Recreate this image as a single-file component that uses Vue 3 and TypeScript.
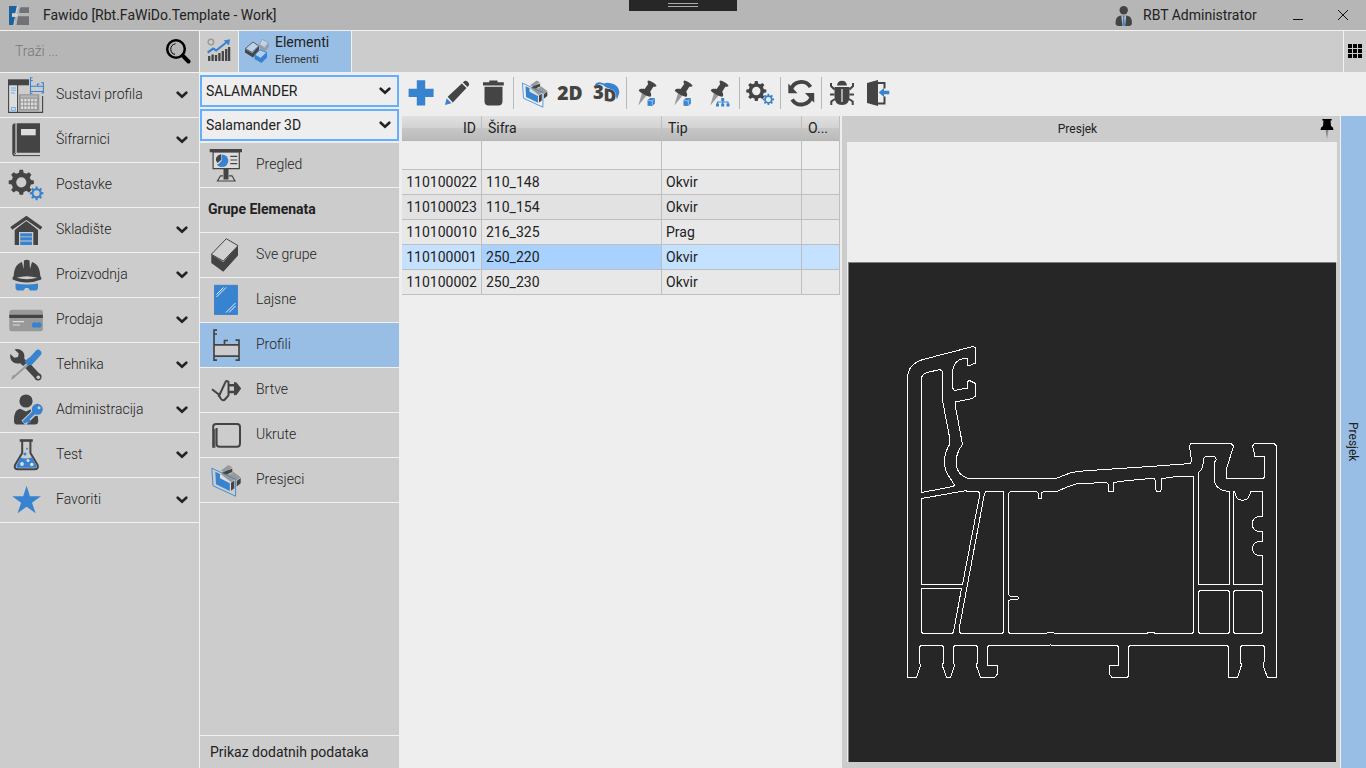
<script setup lang="ts">
import { ref } from 'vue'

interface MenuItem { label: string; icon: string; expandable?: boolean; heading?: boolean }
interface Row { id: string; code: string; type: string }

const INK = '#444'
const BLUE = '#3883cf'

function gear(cx: number, cy: number, outer: number, inner: number, hole: number, color: string): string {
  const teeth = 8
  const step = (Math.PI * 2) / teeth
  const pts: string[] = []
  for (let i = 0; i < teeth; i++) {
    const a = i * step
    const corners: [number, number][] = [[-0.3, inner], [-0.18, outer], [0.18, outer], [0.3, inner]]
    for (const [k, r] of corners) {
      pts.push(`${(cx + r * Math.cos(a + k * step)).toFixed(2)} ${(cy + r * Math.sin(a + k * step)).toFixed(2)}`)
    }
  }
  return `<path fill-rule="evenodd" fill="${color}" d="M${pts.join('L')}ZM${cx - hole} ${cy}a${hole} ${hole} 0 1 0 ${hole * 2} 0a${hole} ${hole} 0 1 0 ${-hole * 2} 0Z"/>`
}

let keys = ''
for (let r = 0; r < 3; r++) for (let c = 0; c < 5; c++) keys += `<rect x="${12.8 + c * 3.4}" y="${21.8 + r * 3.8}" width="2.4" height="2.6" fill="#ddd"/>`

const sectionIcon = `
  <path fill="#999" d="M12.7 8.8L20.3 3L24.3 5.3L17 10.5ZM21.3 13L25.3 9.7L32.7 15.3L28.7 18.3ZM12 12.6L17.5 10L29 16L22 20.6Z"/>
  <path fill="${INK}" d="M13.5 11L24.3 6.5V10L18.5 12.6ZM23 20.7L26.3 18.5V26.3L23 28.7ZM28.7 18.9L32.7 16V21.3L28.7 24.5Z"/>
  <path fill="#ddd" d="M12 12.5L13 12.2L22.7 20V29H21.8V21L12 16.2Z"/>
  <path fill="${BLUE}" d="M7.3 9.7L12 12V16.3L21.8 21.3V29L8 22.3Z"/>
  <path fill="none" stroke="${BLUE}" stroke-width=".9" d="M3.8 6.2L27.6 17.3V34.2L5 23.8Z"/>`

const pin = `
  <path fill="#999" d="M12 18L16.5 20.5L8.3 30.5Z"/>
  <path fill="${INK}" d="M18 5.5C20.5 5.5 26 8.7 26.5 11C25.7 12 24 11.5 23.3 11.8L20.2 16.8C21.5 19 21.5 20.7 20.5 21.8C17.5 22 9.5 17.6 8.7 15.3C10 13.7 12 13.6 14.6 14L18.2 9C17.5 7.6 17.3 6.3 18 5.5Z"/>`
const cube = `<path fill="${BLUE}" d="M17.5 25.3L20 23H25L24.8 28.7L22.3 31L17.5 30.7Z"/><path d="M18.3 25.6L22.3 25.8L24.6 23.7M22.3 25.8V30.4" fill="none" stroke="#eee" stroke-width=".6"/>`

const icons: Record<string, string> = {
  systems: `<path fill="#ddd" d="M1 8h8.5v27H1z"/><path fill="${INK}" d="M0 2.3h21v6H0z"/><path fill="none" stroke="${INK}" stroke-width="1.1" d="M.6 8v27.4H34.6V19M9.6 8v27"/>
    <path fill="none" stroke="#63b0f5" stroke-width="1" d="M3 11h5M3 13.2h5M3 16h4M3.4 30.5h4v2.8h-4z"/>
    <path fill="none" stroke="${BLUE}" stroke-width="1.1" d="M24.5 .8h-2V16.8h2M22.5 3.5h2.2M22.5 9.3H35M22.5 14.5H35M29.5 9V7h2M33 5.8h2.4V16h-2"/>
    <path fill="#999" d="M11 17.2h20.3v16.5H11z"/><path fill="#b5b5b5" d="M12.5 18.4h17.3v2.2H12.5z"/>${keys}`,
  book: `<path fill="${INK}" d="M8.7 1.3H32V30.7H8.7zM7.4 1.3V30.5L4.3 33V4.3Q4.3 1.3 7.4 1.3Z"/><path fill="#ddd" d="M13 7h14.7v6.3H13z"/><path fill="none" stroke="${INK}" stroke-width="1" d="M5 33.6H32M8 31.3L5 33"/>`,
  gears: gear(13.3, 15.3, 12.7, 9.9, 5.1, INK) + gear(28.6, 26.3, 6.9, 5.1, 3, BLUE),
  warehouse: `<path fill="${INK}" d="M6.7 18L18.3 8.5L30 18V33H6.7Z"/><path fill="none" stroke="#ccc" stroke-width="5.2" d="M2 17.3L18.3 5.8L35 17.3"/><path fill="none" stroke="${INK}" stroke-width="3.4" d="M3.3 16.4L18.4 5.8L33.4 16.4"/><path fill="#ccc" d="M11 20H25.3V33H11z"/><path fill="${BLUE}" d="M12.2 21.2H24v3.2H12.2zM12.2 25.2H24v3.3H12.2zM12.2 29.4H24v3.6H12.2z"/>`,
  helmet: `<path fill="${INK}" d="M5.7 19C6 11 9 6.5 14 5L15.5 12L16 3.5Q18.6 1.8 21.5 3.5L22 12L24 5C29 6.5 32 11 32.3 19Q34 20.5 33.2 22.5Q26 25.5 19 25.5Q11 25.5 4.6 22.5Q4 20 5.7 19Z"/><path fill="#ccc" d="M8.5 20.8Q18.5 17.8 29.5 20.8Q18.5 23.5 8.5 20.8Z"/><path fill="${BLUE}" d="M7.5 26.5Q19 28.5 30 26.5V31.5L28.5 33.5H22L20.3 31H17.3L15.5 33.5H9L7.5 31.5Z"/>`,
  card: `<rect x="1.3" y="7.7" width="33.6" height="21.5" rx="2.5" fill="#999"/><path fill="${INK}" d="M1.3 12.8H34.9V15.9H1.3z"/><path stroke="#ddd" stroke-width="1.2" d="M4.7 19.7H16M4.7 23H12"/><circle cx="26.6" cy="23" r="2.8" fill="${BLUE}"/><circle cx="30.7" cy="23" r="2.8" fill="${BLUE}"/>`,
  tools: `<path fill="none" stroke="#999" stroke-width="1.9" d="M8 28L21 16.5"/><path fill="#999" d="M3 32.5L4.5 28.5L8.5 27.2L8.7 28.4L5.5 31.8Z"/><path fill="${INK}" d="M6.5 2.5Q11 1 14.7 4.5Q17 7 16.2 11.5L19.5 15L15.3 19L12 16.2Q7 17.5 3.8 14Q1.5 11 2.2 7L6.3 10.7L10 10L10.7 6.5Z"/><path stroke="${INK}" stroke-width="6.4" d="M19.8 19L29 28.8"/><circle cx="30" cy="29.8" r="3.6" fill="${INK}"/><circle cx="30.3" cy="30.2" r="1.8" fill="#ccc"/><path stroke="${BLUE}" stroke-width="6.4" stroke-linecap="round" d="M22.5 14.5L30.2 6"/><path stroke="${BLUE}" stroke-width="6.4" d="M18.5 16.8L23.5 12.8"/>`,
  admin: `<circle cx="18" cy="9" r="6.6" fill="${INK}"/><path fill="${INK}" d="M6 29Q5.5 18 12 16.8L18 19.5L24 16.8Q30 18 30.3 29Q30 32.5 27 32.5H9Q6 32.5 6 29Z"/><path stroke="#ccc" stroke-width="6" fill="none" d="M27 20L15.5 31"/><circle cx="29.2" cy="17.5" r="6.5" fill="#ccc"/><path stroke="${BLUE}" stroke-width="3.8" fill="none" d="M27 19.5L15.8 30.5M19.5 28L22 30.3"/><circle cx="29.3" cy="17.3" r="5.5" fill="${BLUE}"/><circle cx="31" cy="15.8" r="1.5" fill="#ccc"/>`,
  flask: `<path fill="none" stroke="${INK}" stroke-width="2" stroke-linejoin="round" d="M14.2 4V16L7 28Q5.7 32.2 10 32.3H26.5Q31 32.2 29.6 28L22.4 16V4"/><path stroke="${INK}" stroke-width="2.6" d="M11.7 3.5H24.8"/><path fill="${BLUE}" d="M12.5 20.5Q17 22.5 24 20.5L28.5 28.7Q29 30.8 26.5 30.8H10.5Q8 30.8 8.5 28.5Z"/><g fill="#ddd"><circle cx="14" cy="27" r="1.9"/><circle cx="20" cy="23.5" r="1.5"/><circle cx="23.8" cy="27.5" r="1.8"/></g><circle cx="19" cy="11.8" r="1" fill="${BLUE}"/><circle cx="17" cy="17" r="1.5" fill="${BLUE}"/>`,
  star: `<path fill="${BLUE}" d="M18.6 3.8L22 14.3H33L24 20.7L27.6 31.2L18.6 24.7L9.6 31.2L13.1 20.7L4.2 14.3H15.2Z"/>`,
  overview: `<path fill="#ddd" stroke="${INK}" stroke-width="1.2" d="M5.1 5H31.3V21.7H5.1z"/><path fill="${INK}" d="M1.7 2H34V5.2H1.7z"/><circle cx="14" cy="13.7" r="6.3" fill="${BLUE}"/><path fill="#ddd" d="M6.5 7H13.5V14L10.5 17L7 18Z"/><path fill="${INK}" d="M13 7.2V13L9.5 16Q6.5 12.5 9 9.5Q10.5 7.5 13 7.2ZM15.5 21.5h5v11h-5z"/><path fill="none" stroke="${INK}" stroke-width="1.2" d="M22.3 9.3h7M22.3 13h7M22.3 16.7h7M15 28.8H12.5L9.5 34H27L24 28.8H21"/>`,
  brick: `<path fill="${INK}" d="M3.3 17.5L15.3 25L30 8.7V18.5L15.3 34.7L3.3 26Z"/><path fill="#d0d0d0" stroke="${INK}" stroke-width="1" stroke-linejoin="round" d="M18.3 1.7L30 8.7L15.3 24L3.3 17.3Z"/>`,
  glass: `<path fill="${BLUE}" stroke="#2d75c0" stroke-width=".7" d="M6.5 3.3H29.5V32.5H6.5z"/><path stroke="#e5edf5" stroke-width="1" d="M8.5 12.5L15.5 5.5M8.5 15L18 5.5M18 30.5L27.5 21M21 30.5L27.5 24"/>`,
  profile: `<path fill="#ccc" d="M6 18H31V29H6z"/><path fill="none" stroke="${INK}" stroke-width="1.7" d="M9 3.2H6V33.2H9M6 7H9M6 17.8H31M6 29.2H31M27.5 13.2H31V33.2H27.5M16.5 17.5V13.5H20"/>`,
  gasket: `<path fill="none" stroke="${INK}" stroke-width="2" stroke-linejoin="round" d="M4 17.3L12.3 23.6M10.5 25L17.3 10.3Q18.3 7.8 20.5 10V23.3L17.3 27Q15 29.6 12.7 26.5L10.5 22.5"/><path fill="none" stroke="${INK}" stroke-width="2.5" d="M21 13.3H28V20H21"/><path fill="${INK}" d="M26 10L28.5 10.5L33.2 16.6L28.5 23L26 23.3Z"/>`,
  brace: `<path fill="none" stroke="${INK}" stroke-width="2" d="M5.2 30.8V9.5Q5.2 7 8 7H29Q32 7 32 10V26.5Q32 29.7 29 29.7H11.5Q8.6 29.7 8.6 27V11"/><path stroke="${INK}" stroke-width="1.2" d="M6.8 12V30.8"/>`,
  section: sectionIcon,
  sectionTool: `<g transform="translate(3.2 2.8) scale(.86)">${sectionIcon}</g>`,
  add: `<path fill="${BLUE}" d="M13.8 5.3h8.4v8.4h8.4V22h-8.4v8.4h-8.4V22H5.6v-8.3h8.2z"/>`,
  edit: `<path fill="${BLUE}" d="M7.6 23.3L12.5 28.2L6 29.9Z"/><path fill="${INK}" d="M8.7 21.7L22.8 8.4L27.5 13L13.8 27.4ZM23.9 7.4L25.5 6.1Q27 5.2 28.5 6.5L29.6 7.7Q30.8 9.1 29.8 10.5L28.6 12Z"/>`,
  remove: `<path fill="${INK}" d="M14.3 7.3V5.6H22.5V7.3H28.8V10.4H8V7.3ZM9.5 11.8H27.5V26.5Q27.3 30.4 23.5 30.4H13.5Q9.7 30.4 9.5 26.5Z"/>`,
  twoD: `<text x="5.2" y="24.6" font-family="Open Sans" font-weight="800" font-size="19" textLength="25.4" lengthAdjust="spacingAndGlyphs" fill="${INK}">2D</text>`,
  threeD: `<path fill="${BLUE}" d="M6.5 11Q7.5 7.2 12 7.3L16 8.5Q19 7 23 8.2Q31 10 31.4 17.5L29 24.5Q27.5 18 23 14.5L17.5 12Q14.5 8.5 11 9.5Z"/><text x="4.9" y="24" font-family="Open Sans" font-weight="800" font-size="18.5" fill="${INK}">3</text><text transform="translate(15.4 25.5) skewY(10)" font-family="Open Sans" font-weight="800" font-size="17.5" fill="${INK}" stroke="#eee" stroke-width=".6" paint-order="stroke">D</text>`,
  pinCube: `<g transform="translate(1 0)">${pin}${cube}</g>`,
  pinTree: `<g transform="translate(1 0)">${pin}<path fill="none" stroke="${BLUE}" stroke-width="1.1" d="M20.7 25V29M15.5 29V27H26V29"/><path fill="${BLUE}" d="M19.2 23h3v3h-3zM14 28.5h3v3h-3zM19.2 28.5h3v3h-3zM24.5 28.5h3v3h-3z"/></g>`,
  gearsTool: gear(14.3, 16, 10.1, 7.8, 4.2, INK) + gear(26.4, 24.4, 5.7, 4.2, 2.5, BLUE),
  refresh: `<path fill="none" stroke="${INK}" stroke-width="3.8" d="M7.8 15.2A10.8 10.8 0 0 1 27.5 12M28.8 21A10.8 10.8 0 0 1 9.1 24.4"/><path fill="${INK}" d="M5.3 8.5V18.2H14.5ZM31.2 27.7V18H22Z"/>`,
  bug: `<path fill="${INK}" d="M13 10.5Q13.5 5.8 18 5.8T23 10.5ZM10.5 12H25.5V21.5Q25.5 30 18 30T10.5 21.5Z"/><path fill="none" stroke="${INK}" stroke-width="2" d="M10.5 14.5L7 11V8M25.5 14.5L29 11V8M10.5 19.5H6M25.5 19.5H30M11 24L7.3 26.5V30M25 24L28.7 26.5V30"/><path stroke="#eee" stroke-width="1.2" d="M18 14V27"/>`,
  exit: `<path fill="${INK}" d="M7 8L18 5V31L7 28Z"/><path fill="none" stroke="${INK}" stroke-width="2" d="M18 8H24.5V13.5M24.5 21.5V28.5H18"/><path fill="${BLUE}" d="M18.7 17.4L24 13V15.8H29.3V19.2H24V22Z"/>`,
  analytics: `<g transform="translate(-.3 0)"><circle cx="4.2" cy="4" r="2.8" fill="none" stroke="#999" stroke-width="1.4"/><path stroke="${INK}" stroke-width="2.3" d="M2.5 23V18M5.9 23V16.5M9.3 23V17M12.7 23V15M16.1 23V13M19.5 23V11M22.4 23V9"/><path fill="none" stroke="${BLUE}" stroke-width="2.2" d="M1 14.5L6.5 10.5L9.5 12.5L19.5 4.5"/><path fill="${BLUE}" d="M17 2.6L23.4 1.2L22.2 7.4Z"/></g>`,
  elements: `<path fill="${INK}" d="M0 11L7.3 15.5L14 8V12L8 19.5L0 14.5Z"/><path fill="#bcd3ea" stroke="${INK}" stroke-width=".8" d="M8 4L13.7 8L7 14.5L.4 10.5Z"/><path fill="#999" d="M13 6L20 10.5L24 5V8.5L20.5 13L15 10.5Z"/><path fill="#bcd3ea" stroke="#999" stroke-width=".8" d="M17 1.3L23.4 4.7L19.5 9.5L14.5 6.5Z"/><path fill="${BLUE}" d="M9.5 17L15.5 20.5L22 14.5V19.5L16.5 25L9.5 21Z"/><path fill="#b0d0f0" stroke="${BLUE}" stroke-width="1" d="M15 11.7L21.8 14.5L15.7 20.3L9.7 17Z"/>`,
}

const mainMenu: MenuItem[] = [
  { label: 'Sustavi profila', icon: 'systems', expandable: true },
  { label: 'Šifrarnici', icon: 'book', expandable: true },
  { label: 'Postavke', icon: 'gears' },
  { label: 'Skladište', icon: 'warehouse', expandable: true },
  { label: 'Proizvodnja', icon: 'helmet', expandable: true },
  { label: 'Prodaja', icon: 'card', expandable: true },
  { label: 'Tehnika', icon: 'tools', expandable: true },
  { label: 'Administracija', icon: 'admin', expandable: true },
  { label: 'Test', icon: 'flask', expandable: true },
  { label: 'Favoriti', icon: 'star', expandable: true },
]

const groupMenu: MenuItem[] = [
  { label: 'Pregled', icon: 'overview' },
  { label: 'Grupe Elemenata', icon: '', heading: true },
  { label: 'Sve grupe', icon: 'brick' },
  { label: 'Lajsne', icon: 'glass' },
  { label: 'Profili', icon: 'profile' },
  { label: 'Brtve', icon: 'gasket' },
  { label: 'Ukrute', icon: 'brace' },
  { label: 'Presjeci', icon: 'section' },
]

const toolbar: string[] = ['add', 'edit', 'remove', '|', 'sectionTool', 'twoD', 'threeD', '|', 'pinCube', 'pinCube', 'pinTree', '|', 'gearsTool', '|', 'refresh', '|', 'bug', 'exit']
const combos: string[] = ['SALAMANDER', 'Salamander 3D']
const rows: Row[] = [
  { id: '110100022', code: '110_148', type: 'Okvir' },
  { id: '110100023', code: '110_154', type: 'Okvir' },
  { id: '110100010', code: '216_325', type: 'Prag' },
  { id: '110100001', code: '250_220', type: 'Okvir' },
  { id: '110100002', code: '250_230', type: 'Okvir' },
]
const activeGroup = ref('Profili')
const selectedRow = ref('110100001')

const contours: string[] = [
  'M907.5 677.5V378Q908 364 923 359.5L973 346.5L975.5 347.5V363L970 365.5L967.5 365V359L963 358.5Q953 361 952.5 372V388L954.5 390.5L967.5 388V381.5L969.5 380.5L975.5 383.5V396L972 398.5L955.5 402V407L962.5 444.5C954 456 952 473 968 478.5H1056L1070 473Q1075 471.5 1090 470.5L1150 466.5L1190.5 463.5L1191.5 461L1189.5 446L1191 443.5H1231L1233.5 446L1226.5 469V478.5H1263L1264.5 477V456.5H1255L1252.5 446L1254.5 443.5H1274L1276.5 446V677.5H1267.5L1264 668L1263.5 663L1264.5 661V647L1263 645.5H1242L1240.5 647V662L1241.5 665L1237.5 677.5H1228.5V647L1227 645.5H1130L1128.5 647V676L1127 677.5H1112L1109.5 674.5V665.5H1118.5V647L1117 645.5H1052L1050.5 644.5L1049 645.5H989L987.5 647V665.5H997.5V674L994.5 677.5H980.5L976.5 666L977.5 661V647L976 645.5H955L953.5 647V662L954.5 666L950.5 677.5H946.5L942.5 666L943.5 661V647L942 645.5H921L919.5 647V661L920.5 666L916.5 677.5Z',
  'M921.5 492.5V379Q921.5 374 927 372.5L940 369.5L942.5 371.5V400.5L949.5 437V444.5C943 455 942.5 469 950 478L954.5 485L953 486.5Z',
  'M921.5 498.5L966.5 490.5L967 491.5H978L980 493.5L962.5 584.5H921.5Z',
  'M921.5 588.5H961.5L953.5 632L952 633.5H923L921.5 632Z',
  'M986 491.5H1003.5V632L1002 633.5H961L959.5 632V627L984.5 493.5Z',
  'M1008.5 493.5L1010.5 491.5H1036.5L1038.5 493.5V498.5H1041.5V493L1043.5 491.5H1056.5L1071 485.5Q1076 483.5 1082 483.5L1106.5 482.5L1108.5 484.5V491.5H1113.5V483L1119 481.5L1150 478.5H1154L1155.5 480.5V489L1157 491.5H1160L1161.5 489V479L1163 478.5L1177 476.5H1193.5V632L1192 633.5H1156L1153 632.5H1149L1146 633.5H1055L1053 632.5H1048L1046 633.5H1010L1008.5 632V601L1010.5 599.5H1017.5L1018.5 598L1017.5 596.5H1010.5L1008.5 594.5Z',
  'M1198.5 584.5V472.5Q1203.5 469 1203.5 458.5L1205.5 456.5H1214.5L1216.5 459.5L1214.5 462V481.5Q1217 491 1229.5 491.5V584.5Z',
  'M1233.5 584.5V491.5H1234.5L1235.5 495A7.3 7.3 0 0 0 1249.5 495L1251 491.5H1262.5V516.5H1259.5A7.5 7.5 0 0 0 1259.5 531.5H1262.5V541.5H1259.5A7 7 0 0 0 1259.5 555.5H1262.5V584.5Z',
  'M1200 590.5H1228L1229.5 592V632L1228 633.5H1200L1198.5 632V592Z',
  'M1235 590.5H1261L1262.5 592V632L1261 633.5H1235L1233.5 632V592Z',
]
</script>

<template>
  <div class="app">
    <header class="titlebar">
      <svg class="logo" viewBox="0 0 20 20"><path fill="#1c629c" d="M0 0H8L7 7H3V11H7L5 19H0Z"/><path fill="#cfd3d6" d="M8 0H9.5L7.3 8H9.2L8.5 10.5H6.8L5.5 19H4.3L6 10.5H3V8H6Z"/><path fill="#707277" d="M11.5 1.3H20V7H10.5Q10 3 11.5 1.3ZM9 10.3H20V19H7.5Z"/></svg>
      <span class="title">Fawido [Rbt.FaWiDo.Template - Work]</span>
      <div class="notch"><i></i></div>
      <svg class="user" viewBox="0 0 18 20"><circle cx="8.7" cy="4.2" r="4.2" fill="#444"/><path fill="#444" d="M.5 17Q.5 10.5 5 9.7H12.5Q17 10.5 17 17Q16.7 20 14 20H3.5Q.7 20 .5 17Z"/><path fill="#bbb" d="M6.3 9.7h4.9l-1 10H7.3z"/><path fill="#3883cf" d="M7.7 10h2l-.5 2 .8 7.5H7.4l.8-7.5z"/></svg>
      <span class="username">RBT Administrator</span>
      <svg class="winbtn min" viewBox="0 0 12 12"><path d="M1 10.5H11"/></svg>
      <svg class="winbtn close" viewBox="0 0 12 12"><path d="M1 1L11 11M11 1L1 11"/></svg>
    </header>

    <div class="body">
      <aside class="sidebar">
        <div class="search">
          <span>Traži ...</span>
          <svg viewBox="0 0 26 26"><circle cx="11" cy="11" r="8.8" fill="none" stroke="#000" stroke-width="2.5"/><path d="M17.7 17.7L23.5 23.5" stroke="#000" stroke-width="4" stroke-linecap="round"/><path d="M10.5 5.7Q5.5 7 5.8 11.5T10 16.3" fill="none" stroke="#000" stroke-width="1"/></svg>
        </div>
        <div v-for="item in mainMenu" :key="item.label" class="item">
          <svg class="icon" viewBox="0 0 36 36" v-html="icons[item.icon]"></svg>
          <span class="label">{{ item.label }}</span>
          <svg v-if="item.expandable" class="chevron" viewBox="0 0 12 8"><path d="M1.7 1.7L6 5.7L10.3 1.7"/></svg>
        </div>
      </aside>

      <div class="workspace">
        <nav class="tabs">
          <div class="tab home"><svg viewBox="0 0 24 24" v-html="icons.analytics"></svg></div>
          <div class="tab current">
            <svg viewBox="0 0 25 25" v-html="icons.elements"></svg>
            <div class="names"><b>Elementi</b><small>Elementi</small></div>
          </div>
          <div class="apps"><i v-for="n in 9" :key="n"></i></div>
        </nav>

        <div class="content">
          <aside class="groups">
            <div v-for="c in combos" :key="c" class="combo">
              <span>{{ c }}</span>
              <svg class="chevron" viewBox="0 0 12 8"><path d="M1.7 1.7L6 5.7L10.3 1.7"/></svg>
            </div>
            <div class="list">
              <div v-for="g in groupMenu" :key="g.label" class="item" :class="{ heading: g.heading, active: g.label === activeGroup }" @click="!g.heading && (activeGroup = g.label)">
                <svg v-if="g.icon" class="icon" viewBox="0 0 36 36" v-html="icons[g.icon]"></svg>
                <span class="label">{{ g.label }}</span>
              </div>
              <div class="more">Prikaz dodatnih podataka</div>
            </div>
          </aside>

          <div class="main">
            <div class="toolbar">
              <template v-for="(t, i) in toolbar" :key="i">
                <i v-if="t === '|'" class="sep"></i>
                <svg v-else class="tool" viewBox="0 0 36 36" v-html="icons[t]"></svg>
              </template>
            </div>
            <div class="panes">
              <div class="grid">
                <div class="row head"><span class="num">ID</span><span>Šifra</span><span>Tip</span><span>O...</span></div>
                <div class="row filter"><span></span><span></span><span></span><span></span></div>
                <div v-for="r in rows" :key="r.id" class="row" :class="{ selected: r.id === selectedRow }" @click="selectedRow = r.id">
                  <span class="num">{{ r.id }}</span><span class="code">{{ r.code }}</span><span>{{ r.type }}</span><span></span>
                </div>
              </div>
              <section class="preview">
                <div class="preview-head">
                  <span>Presjek</span>
                  <svg viewBox="0 0 14 20"><path fill="#888" d="M5.5 11h3L7 20z"/><path fill="#000" d="M2.3 0h9.4v1.6H10.5L11 7Q13.5 8 13.5 11H.5Q.5 8 3 7L3.5 1.6H2.3z"/></svg>
                </div>
                <div class="blank"></div>
                <svg class="drawing" viewBox="848 262 488 500" shape-rendering="crispEdges">
                  <path class="frame" d="M848.5 762V262.5H1336" />
                  <path v-for="(d, i) in contours" :key="i" :d="d" />
                </svg>
              </section>
              <div class="sidetab"><span>Presjek</span></div>
            </div>
          </div>
        </div>
      </div>
    </div>
  </div>
</template>

<style>
body { margin: 0; overflow: hidden; }
</style>

<style scoped>
.app { width: 1366px; height: 768px; display: flex; flex-direction: column; background: #eee; color: #222; font: 14px/18px Roboto, "Liberation Sans", sans-serif; overflow: hidden; }
.app * { box-sizing: border-box; }
svg { display: block; flex: none; }
.titlebar { position: relative; height: 31px; flex: none; display: flex; align-items: center; background: #b6b6b6; border-bottom: 1px solid #f2f2f2; }
.logo { width: 20px; height: 20px; margin: 1px 0 0 9px; }
.title { margin-left: 14px; }
.notch { position: absolute; left: 629px; top: 0; width: 108px; height: 11px; background: #272727; display: flex; justify-content: center; }
.notch i { width: 30px; height: 4px; margin-top: 3px; border: solid #aaa; border-width: 1px 0; }
.user { width: 18px; height: 20px; margin: 2px 0 0 auto; }
.username { width: 150px; margin-left: 10px; }
.winbtn { width: 12px; height: 12px; fill: none; stroke: #111; stroke-width: 1; }
.min { margin-left: -1px; }
.close { margin: 0 17px 0 33px; }
.body { flex: 1; display: flex; min-height: 0; }
.sidebar { width: 200px; background: #ccc; border-right: 1px solid #f2f2f2; flex: none; }
.search { height: 42px; background: #b6b6b6; border-bottom: 1px solid #f2f2f2; display: flex; align-items: center; justify-content: space-between; padding: 0 8px 1px 15px; color: #777; font-weight: 300; }
.search svg { width: 26px; height: 26px; }
.item { height: 45px; display: flex; align-items: center; padding-left: 8px; border-bottom: 1px solid #f2f2f2; }
.icon { width: 36px; height: 36px; }
.label { margin-left: 12px; font-weight: 300; padding-bottom: 2px; flex: 1; }
.chevron { width: 12px; height: 8px; fill: none; stroke: #222; stroke-width: 2.6; stroke-linecap: round; }
.sidebar .chevron { margin: 0 11px 1px 0; }
.workspace { flex: 1; display: flex; flex-direction: column; min-width: 0; }
.tabs { height: 41px; flex: none; display: flex; background: #ccc; }
.tab { display: flex; border-right: 1px solid #f2f2f2; }
.home { width: 39px; padding: 7px 0 0 7px; }
.home svg { width: 24px; height: 24px; }
.current { width: 113px; background: #99bee5; padding-left: 6px; }
.current svg { width: 25px; height: 25px; margin-top: 7px; }
.names { margin: 2px 0 0 5px; }
.names b { display: block; font-weight: 400; }
.names small { display: block; font-size: 11.3px; line-height: 18px; color: #333; }
.apps { width: 23px; margin-left: auto; border-left: 1px solid #f2f2f2; padding: 13px 0 0 4px; display: grid; grid-template-columns: repeat(3, 4px); grid-auto-rows: 4px; gap: 1px; }
.apps i { background: #000; }
.content { flex: 1; display: flex; min-height: 0; }
.groups { width: 199px; padding-top: 3px; display: flex; flex-direction: column; flex: none; }
.combo { height: 32px; margin-bottom: 2px; border: 2px solid #64b0ff; display: flex; align-items: center; justify-content: space-between; padding: 0 6px 0 4px; flex: none; }
.list { flex: 1; background: #ccc; display: flex; flex-direction: column; }
.heading .label { margin-left: 0; font-weight: 700; }
.active { background: #99bee5; }
.more { height: 33px; margin-top: auto; border-top: 1px solid #f2f2f2; padding: 7px 0 0 10px; }
.main { flex: 1; display: flex; flex-direction: column; min-width: 0; }
.toolbar { height: 44px; flex: none; display: flex; padding: 3px 0 0 4px; }
.tool { width: 36px; height: 36px; }
.sep { width: 1px; height: 32px; margin: 2px 2px 0; background: #b5bac0; }
.panes { flex: 1; display: flex; min-height: 0; }
.grid { width: 438px; margin-left: 3px; flex: none; }
.row { display: grid; grid-template-columns: 80px 180px 140px 38px; height: 25px; background: #e8e8e8; }
.row:nth-child(even) { background: #e2e2e2; }
.row > span { border: solid #bfbfbf; border-width: 0 1px 1px 0; padding: 3px 4px 0; }
.row > .num { text-align: right; }
.row.filter { height: 29px; background: #eee; }
.row.head { background: linear-gradient(#e0e0e0, #d2d2d2 50%, #c6c6c6 50%, #bababa); }
.row.head > span { padding-left: 6px; padding-right: 5px; border-bottom-color: #b4b4b4; }
.row.selected { background: #c4e1ff; }
.row.selected .code { background: #a8d1ff; }
.preview { width: 498px; margin-left: 2px; flex: none; background: #ccc; padding: 0 3px 0 5px; }
.preview-head { height: 26px; position: relative; font-size: 12px; text-align: center; padding: 4px 29px 0 0; }
.preview-head svg { position: absolute; right: 3px; top: 3px; width: 14px; height: 20px; }
.blank { height: 120px; background: #eee; }
.drawing { width: 489px; height: 500px; border-left: 1px solid #eee; background: #262626; fill: none; stroke: #fff; stroke-width: 1; }
.drawing .frame { stroke: #808080; }
.sidetab { flex: 1; background: #99bee5; border-left: 1px solid #f2f2f2; display: flex; align-items: center; justify-content: center; padding-right: 2px; font-size: 12px; }
.sidetab span { writing-mode: vertical-rl; }
</style>
